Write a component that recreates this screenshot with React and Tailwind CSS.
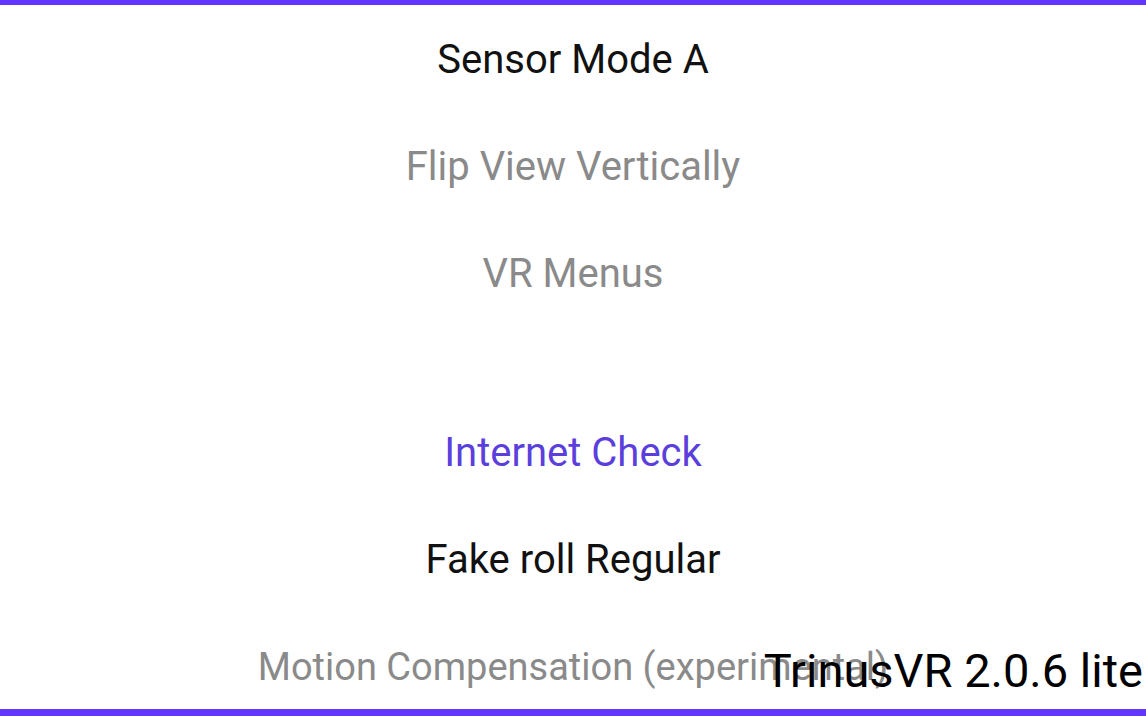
// App.jsx - settings list screen

const items = [
  { label: 'Sensor Mode A', tone: 'text-[#111111]', size: 'text-[40px]' },
  { label: 'Flip View Vertically', tone: 'text-[#8a8a8a]', size: 'text-[40px]' },
  { label: 'VR Menus', tone: 'text-[#8a8a8a]', size: 'text-[40px]' },
  { spacer: true },
  { label: 'Internet Check', tone: 'text-[#5b3fdc]', size: 'text-[40px]' },
  { label: 'Fake roll Regular', tone: 'text-[#111111]', size: 'text-[40px]' },
  { label: 'Motion Compensation (experimental)', tone: 'text-[#8a8a8a]', size: 'text-[38px]' },
];

const App = () => {
  return (
    <div className="relative w-[1146px] h-[716px] bg-white flex flex-col overflow-hidden font-['Roboto','Liberation_Sans',sans-serif]">
      {/* Top bar */}
      <div className="h-[5px] shrink-0 bg-[#6236ff]" />

      {/* Menu list */}
      <div className="flex-1 flex flex-col overflow-hidden pt-[1px]">
        {items.map((item, index) =>
          item.spacer ? (
            <div key={index} className="h-[72px] shrink-0" />
          ) : (
            <div
              key={index}
              className={`h-[107px] shrink-0 flex items-center justify-center leading-none ${item.size} ${item.tone}`}
            >
              {item.label}
            </div>
          )
        )}
      </div>

      {/* Bottom bar */}
      <div className="h-[7px] shrink-0 bg-[#6236ff]" />

      {/* Version overlay */}
      <div className="absolute right-[3px] bottom-[22px] text-[47px] leading-none text-black">
        TrinusVR 2.0.6 lite
      </div>
    </div>
  );
};

export default App;
